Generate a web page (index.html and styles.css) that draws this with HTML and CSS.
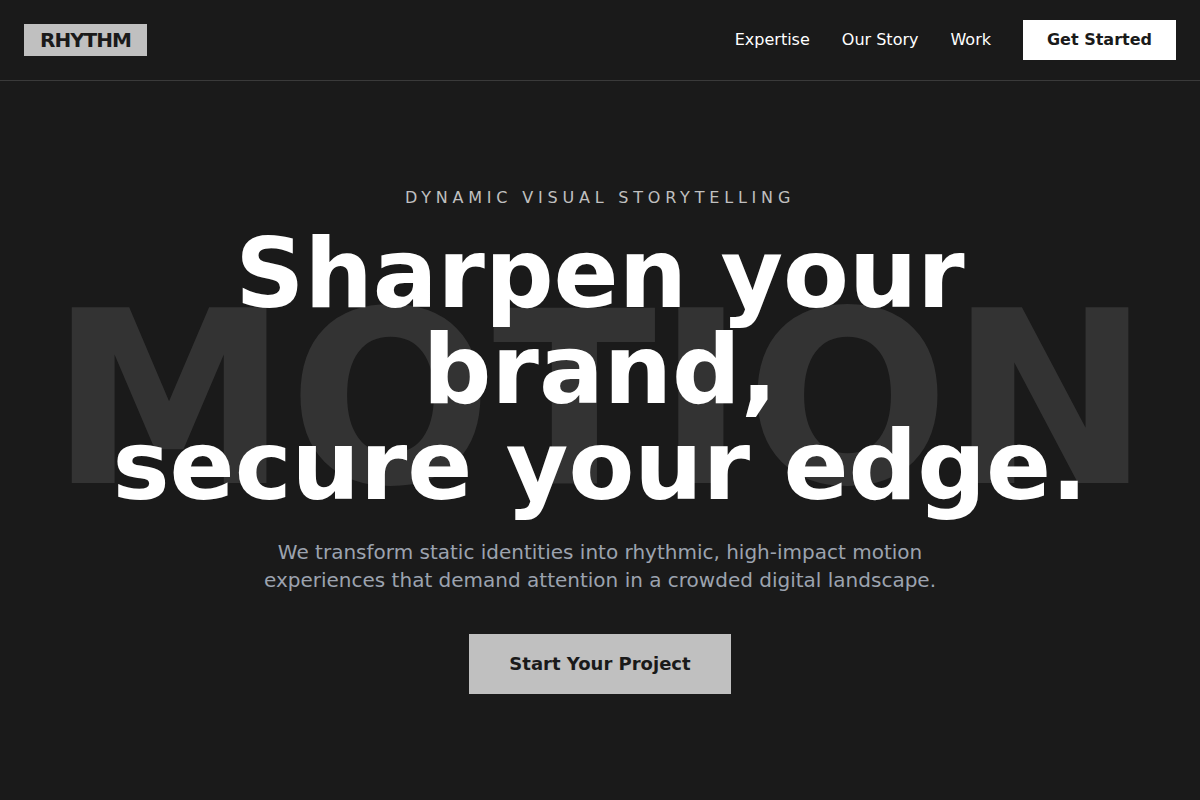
FILE: index.html
```html
<!DOCTYPE html>
<html lang="en">
<head>
  <meta charset="utf-8">
  <meta name="viewport" content="width=device-width, initial-scale=1.0">
  <title>Rhythm</title>
  <link rel="stylesheet" href="styles.css">
</head>
<body>

  <header class="header">
    <a class="logo" href="#">RHYTHM</a>
    <nav class="nav">
      <a href="#expertise">Expertise</a>
      <a href="#story">Our Story</a>
      <a href="#work">Work</a>
      <button class="btn btn-nav" type="button">Get Started</button>
    </nav>
  </header>

  <main class="hero">
    <div class="hero-bg" aria-hidden="true">MOTION</div>
    <div class="hero-content">
      <p class="eyebrow">Dynamic Visual Storytelling</p>
      <h1>Sharpen your brand,<br>secure your edge.</h1>
      <p class="lead">We transform static identities into rhythmic, high-impact motion experiences that demand attention in a crowded digital landscape.</p>
      <button class="btn btn-main" type="button">Start Your Project</button>
    </div>
  </main>

</body>
</html>
```

FILE: styles.css
```css
* {
  box-sizing: border-box;
  margin: 0;
  padding: 0;
}

body {
  background: #1a1a1a;
  color: #fff;
  font-family: "DejaVu Sans", sans-serif;
  font-size: 16px;
  line-height: 24px;
}

a {
  color: inherit;
  text-decoration: none;
}

/* header stays on top of the hero */
.header {
  position: fixed;
  top: 0;
  left: 0;
  right: 0;
  z-index: 10;
  display: flex;
  align-items: center;
  justify-content: space-between;
  padding: 20px 24px;
  background: #1a1a1a;
  border-bottom: 1px solid #3a3a3a;
}

.logo {
  padding: 2px 16px;
  background: #c0c0c0;
  color: #1a1a1a;
  font-size: 20px;
  font-weight: bold;
  line-height: 28px;
  letter-spacing: -1px;
}

.nav {
  display: flex;
  align-items: center;
  gap: 32px;
}

.btn {
  border: none;
  color: #1a1a1a;
  font-family: inherit;
  font-weight: bold;
  cursor: pointer;
}

.btn-nav {
  padding: 8px 24px;
  background: #fff;
  font-size: 16px;
  line-height: 24px;
}

/* hero */
.hero {
  position: relative;
  display: flex;
  align-items: center;
  justify-content: center;
  min-height: 100vh;
  padding: 80px 24px 0;
  overflow: hidden;
  text-align: center;
}

/* big word behind the heading */
.hero-bg {
  position: absolute;
  inset: 0;
  display: flex;
  align-items: center;
  justify-content: center;
  color: #333;
  font-size: 20vw;
  font-weight: bold;
  line-height: 1;
}

.hero-content {
  position: relative;
  max-width: 1024px;
}

.eyebrow {
  margin-bottom: 16px;
  color: #c0c0c0;
  letter-spacing: 0.3em;
  text-transform: uppercase;
}

h1 {
  margin-bottom: 24px;
  font-size: 96px;
  line-height: 1;
}

.lead {
  max-width: 680px;
  margin: 0 auto 40px;
  color: #9ca3af;
  font-size: 20px;
  line-height: 28px;
}

.btn-main {
  padding: 16px 40px;
  background: #c0c0c0;
  font-size: 18px;
  line-height: 28px;
}
```
